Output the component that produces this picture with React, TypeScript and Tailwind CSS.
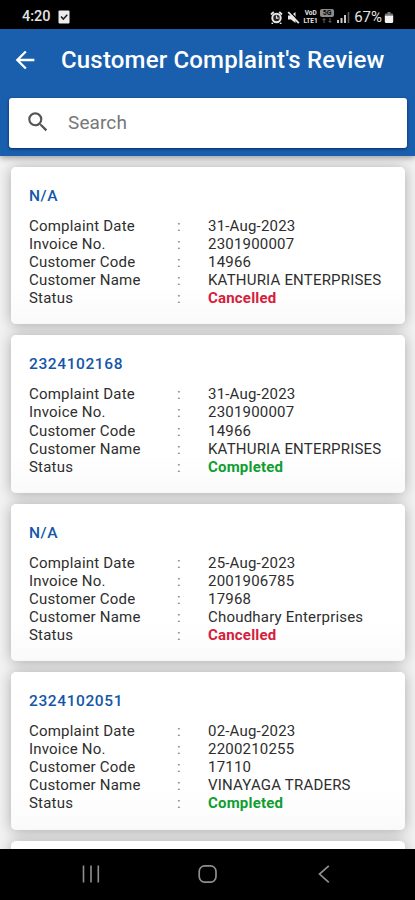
import { MdArrowBack, MdSearch } from "react-icons/md";

type Complaint = {
  title: string;
  date: string;
  invoiceNo: string;
  customerCode: string;
  customerName: string;
  status: "Cancelled" | "Completed";
};

const complaints: Complaint[] = [
  {
    title: "N/A",
    date: "31-Aug-2023",
    invoiceNo: "2301900007",
    customerCode: "14966",
    customerName: "KATHURIA ENTERPRISES",
    status: "Cancelled",
  },
  {
    title: "2324102168",
    date: "31-Aug-2023",
    invoiceNo: "2301900007",
    customerCode: "14966",
    customerName: "KATHURIA ENTERPRISES",
    status: "Completed",
  },
  {
    title: "N/A",
    date: "25-Aug-2023",
    invoiceNo: "2001906785",
    customerCode: "17968",
    customerName: "Choudhary Enterprises",
    status: "Cancelled",
  },
  {
    title: "2324102051",
    date: "02-Aug-2023",
    invoiceNo: "2200210255",
    customerCode: "17110",
    customerName: "VINAYAGA TRADERS",
    status: "Completed",
  },
];

function getStatusClasses(status: Complaint["status"]) {
  if (status === "Cancelled") {
    return "font-bold tracking-[0.2px] text-[#d3203c]";
  }

  return "font-bold tracking-[0.2px] text-[#0f9d32]";
}

function StatusBar() {
  return (
    <div className="flex h-[29px] shrink-0 items-center bg-black pt-[5px] pr-[21px] pl-[22px] text-[#e4e4e4]">
      <span className="text-[14.5px] leading-none font-medium">4:20</span>
      <svg viewBox="0 0 12 14" className="mb-px ml-[7px] h-[14px] w-3">
        <rect x="0.5" y="0.5" width="11" height="13" rx="1" fill="#ececec" />
        <path d="M3 6.5 5.3 9 9.3 4.8" fill="none" stroke="#222" strokeWidth="1.6" />
      </svg>

      <div className="ml-auto flex items-center">
        <svg viewBox="0 0 13 13" className="h-[13px] w-[13px]">
          <path d="M1 3.5 3.8 1M12 3.5 9.2 1M2.8 11.8l-1 1M10.2 11.8l1 1" stroke="#e4e4e4" strokeWidth="1.9" />
          <circle cx="6.5" cy="7" r="4.2" fill="#222" stroke="#e8e8e8" strokeWidth="2" />
          <path d="M6.5 4.6V7.2H8.6" fill="none" stroke="#e8e8e8" strokeWidth="1.2" />
        </svg>
        <svg viewBox="0 0 13 13" className="ml-[4px] h-[13px] w-[13px]">
          <path d="M1 4.5h3L8.5 1v11L4 8.5H1Z" fill="#e8e8e8" />
          <path d="m2.8.6 10 10.6" stroke="#000" strokeWidth="1.4" />
          <path d="m1.2 1 10.6 11.2" stroke="#e8e8e8" strokeWidth="1.8" />
        </svg>
        <div className="ml-[2px] flex w-[17px] flex-col items-center text-[6.5px] leading-[8px] font-bold">
          <span>VoD</span>
          <span>LTE1</span>
        </div>
        <div className="ml-px flex w-[14px] flex-col items-center pb-[3px]">
          <span className="w-full rounded-[2px] bg-[#8d8d8d] text-center text-[7px] leading-[8px] font-bold text-black">
            5G
          </span>
          <svg viewBox="0 0 10 5" className="mt-px h-[5px] w-[10px]" fill="#555">
            <path d="M0 2 2 0 4 2H2.6V5H1.4V2ZM6 3H7.4V0H8.6V3H10L8 5Z" />
          </svg>
        </div>
        <svg viewBox="0 0 13 12" className="ml-[3px] h-3 w-[13px]">
          <path d="M0 9h2v3H0ZM3.5 7h2v5h-2ZM7 4h2v8H7Z" fill="#c8c8c8" />
          <path d="M10.7 1h1.6v11h-1.6Z" fill="#5c5c5c" />
        </svg>
        <span className="ml-[4px] text-[15px] leading-none">67%</span>
        <svg viewBox="0 0 10 14" className="ml-[2px] h-[13px] w-[10px]">
          <path d="M3.4 1h3.2v1.6H8A1.5 1.5 0 0 1 9.5 4v2h-9V4A1.5 1.5 0 0 1 2 2.6h1.4Z" fill="#777" />
          <path d="M.5 5h9v6.5A1.5 1.5 0 0 1 8 13H2A1.5 1.5 0 0 1 .5 11.5Z" fill="#f2f2f2" />
        </svg>
      </div>
    </div>
  );
}

function ComplaintCard({ complaint }: { complaint: Complaint }) {
  const rows = [
    { label: "Complaint Date", value: complaint.date },
    { label: "Invoice No.", value: complaint.invoiceNo },
    { label: "Customer Code", value: complaint.customerCode },
    { label: "Customer Name", value: complaint.customerName },
    { label: "Status", value: complaint.status, className: getStatusClasses(complaint.status) },
  ];

  return (
    <div className="h-[157.4px] shrink-0 rounded-[5px] bg-gradient-to-b from-white from-75% to-[#fafafa] px-[18px] pt-[19px] shadow-[0_1px_14px_rgba(0,0,0,0.3)]">
      <div className="text-[15.5px] leading-5 font-medium tracking-[0.6px] text-[#1457a8]">
        {complaint.title}
      </div>
      <div className="mt-[11.4px]">
        {rows.map((row) => (
          <div
            key={row.label}
            className="flex h-[18.1px] items-center text-[15px] leading-none tracking-[0.2px] whitespace-nowrap text-[#2e2e2e]"
          >
            <span className="w-[148px]">{row.label}</span>
            <span className="w-[31px] text-[#777]">:</span>
            <span className={row.className}>{row.value}</span>
          </div>
        ))}
      </div>
    </div>
  );
}

function NavigationBar() {
  return (
    <div className="z-10 flex h-[51px] shrink-0 items-center justify-between bg-black px-[80px] pb-[2px]">
      <svg viewBox="0 0 22 22" className="h-[22px] w-[22px]" stroke="#8f8f8f" strokeWidth="1.6">
        <path d="M3.5 2.5v17M11 2.5v17M18.3 2.5v17" />
      </svg>
      <svg viewBox="0 0 22 22" className="h-[22px] w-[22px]" fill="none" stroke="#8f8f8f" strokeWidth="1.7">
        <rect x="2.2" y="2.9" width="16.8" height="16.2" rx="5.5" />
      </svg>
      <svg viewBox="0 0 22 22" className="h-[22px] w-[22px]" fill="none" stroke="#8f8f8f" strokeWidth="1.7">
        <path d="m15.8 2.8-9.3 8.3 9.3 8.3" />
      </svg>
    </div>
  );
}

export default function App() {
  return (
    <div className="flex h-[900px] w-[415px] flex-col overflow-hidden bg-[#f2f2f2] font-[Roboto,sans-serif]">
      <StatusBar />

      <header className="z-10 h-[127px] shrink-0 bg-[#195fad] pr-2 pl-[9px] shadow-[0_2px_6px_rgba(0,0,0,0.35)]">
        <div className="flex h-[69px] items-center pb-[8px] pl-[2px] text-white">
          <MdArrowBack className="h-7 w-7" />
          <h1 className="ml-[22px] text-[24px] leading-none font-medium tracking-[0.17px] whitespace-nowrap">
            Customer Complaint's Review
          </h1>
        </div>
        <div className="flex h-[50px] items-center rounded-[3px] bg-white pb-[2px] pl-4 shadow-[0_1px_3px_rgba(0,20,80,0.7)]">
          <MdSearch className="h-[26px] w-[26px] text-[#555]" />
          <span className="ml-[17px] text-[19px] leading-none tracking-[0.1px] text-[#777]">
            Search
          </span>
        </div>
      </header>

      <main className="flex min-h-0 flex-1 flex-col gap-[11px] overflow-hidden pt-[11px] pr-[10px] pl-[11px]">
        {complaints.map((complaint, index) => (
          <ComplaintCard key={index} complaint={complaint} />
        ))}
        <div className="h-[157px] shrink-0 rounded-[5px] bg-white shadow-[0_1px_14px_rgba(0,0,0,0.3)]" />
      </main>

      <NavigationBar />
    </div>
  );
}
